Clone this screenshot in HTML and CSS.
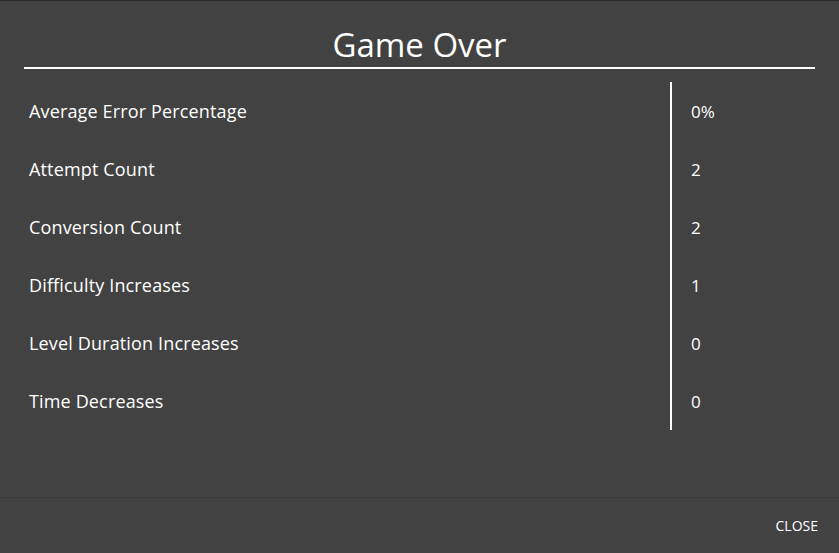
FILE: index.html
```html
<!DOCTYPE html>
<html>
<head>
<meta charset="utf-8">
<link rel="stylesheet" href="styles.css">
</head>
<body>
<div class="dialog">
  <div class="content">
    <h1 class="title">Game Over</h1>
    <div class="stats">
      <div class="row"><div class="label">Average Error Percentage</div><div class="value">0%</div></div>
      <div class="row"><div class="label">Attempt Count</div><div class="value">2</div></div>
      <div class="row"><div class="label">Conversion Count</div><div class="value">2</div></div>
      <div class="row"><div class="label">Difficulty Increases</div><div class="value">1</div></div>
      <div class="row"><div class="label">Level Duration Increases</div><div class="value">0</div></div>
      <div class="row"><div class="label">Time Decreases</div><div class="value">0</div></div>
    </div>
  </div>
  <div class="actions">
    <button class="close">CLOSE</button>
  </div>
</div>
</body>
</html>
```
FILE: styles.css
```css
html, body {
  margin: 0;
  padding: 0;
  background: #424242;
}
body {
  font-family: "Open Sans", "Noto Sans", sans-serif;
  color: #ffffff;
}
.dialog {
  width: 839px;
  height: 553px;
  box-sizing: border-box;
  border-top: 1px solid #2b2b2b;
  display: flex;
  flex-direction: column;
  background: #424242;
}
.content {
  flex: 1;
  padding: 0 24px;
}
.title {
  margin: 0;
  height: 68px;
  box-sizing: border-box;
  padding-top: 24px;
  font-size: 33px;
  font-weight: 400;
  line-height: 40px;
  text-align: center;
  border-bottom: 2px solid #ffffff;
}
.stats {
  margin-top: 13px;
}
.row {
  display: flex;
  height: 58px;
  align-items: center;
}
.label {
  width: 648px;
  padding-left: 5px;
  box-sizing: border-box;
  height: 100%;
  display: flex;
  align-items: center;
  border-right: 2px solid #ffffff;
  font-size: 18px;
  letter-spacing: 0.15px;
}
.value {
  padding-left: 19px;
  font-size: 17px;
}
.actions {
  border-top: 1px solid #3a3a3a;
  height: 55px;
  display: flex;
  justify-content: flex-end;
  align-items: center;
  padding-right: 21px;
}
.close {
  background: none;
  border: none;
  color: #ffffff;
  font-family: "Open Sans", "Noto Sans", sans-serif;
  font-size: 14px;
  padding: 0;
  margin-top: 0;
}
```
